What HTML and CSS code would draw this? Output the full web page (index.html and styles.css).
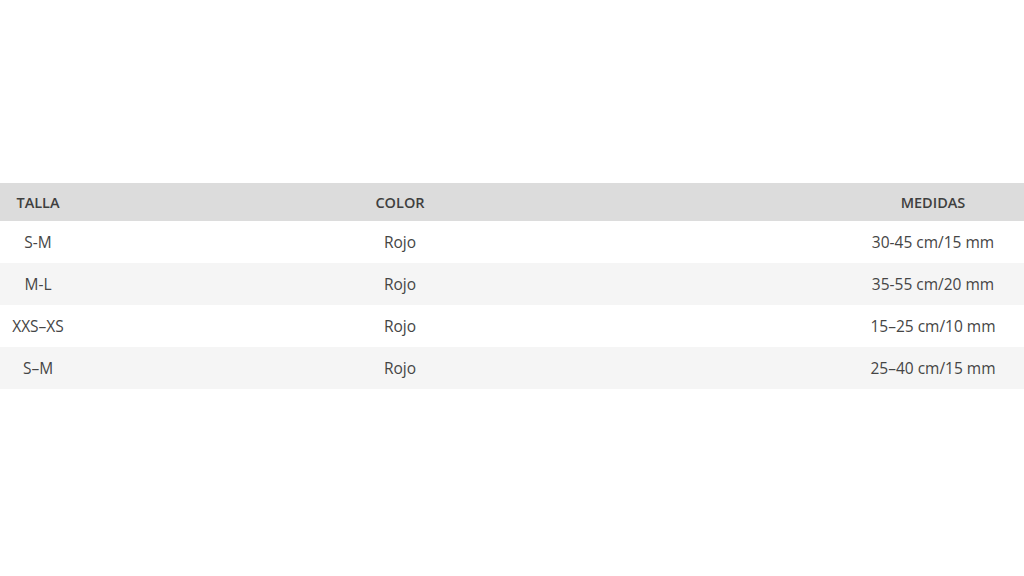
FILE: index.html
```html
<!DOCTYPE html>
<html lang="es">
<head>
<meta charset="utf-8">
<title>Tallas</title>
<link rel="stylesheet" href="styles.css">
</head>
<body>
<div class="page">
  <div class="table">
    <div class="row head">
      <div class="c1">TALLA</div>
      <div class="c2">COLOR</div>
      <div class="c3">MEDIDAS</div>
    </div>
    <div class="row">
      <div class="c1">S-M</div>
      <div class="c2">Rojo</div>
      <div class="c3">30-45 cm/15 mm</div>
    </div>
    <div class="row alt">
      <div class="c1">M-L</div>
      <div class="c2">Rojo</div>
      <div class="c3">35-55 cm/20 mm</div>
    </div>
    <div class="row">
      <div class="c1">XXS–XS</div>
      <div class="c2">Rojo</div>
      <div class="c3">15–25 cm/10 mm</div>
    </div>
    <div class="row alt">
      <div class="c1">S–M</div>
      <div class="c2">Rojo</div>
      <div class="c3">25–40 cm/15 mm</div>
    </div>
  </div>
</div>
</body>
</html>
```
FILE: styles.css
```css
html, body {
  margin: 0;
  padding: 0;
  background: #ffffff;
}
.page {
  width: 1024px;
  height: 576px;
  padding-top: 183px;
  box-sizing: border-box;
  font-family: "Open Sans", "Liberation Sans", sans-serif;
  font-size: 15.5px;
  color: #454545;
}
.table {
  display: flex;
  flex-direction: column;
}
.row {
  display: grid;
  grid-template-columns: 76px 648px 1fr;
  align-items: center;
  height: 42px;
  background: #ffffff;
}
.row.alt {
  background: #f5f5f5;
}
.row.head {
  height: 38px;
  background: #dcdcdc;
  font-size: 14.5px;
  font-weight: 600;
  color: #3f3f3f;
}
.c1, .c2 {
  text-align: center;
  white-space: nowrap;
}
.c3 {
  text-align: center;
  padding-left: 118px;
  white-space: nowrap;
}
```
